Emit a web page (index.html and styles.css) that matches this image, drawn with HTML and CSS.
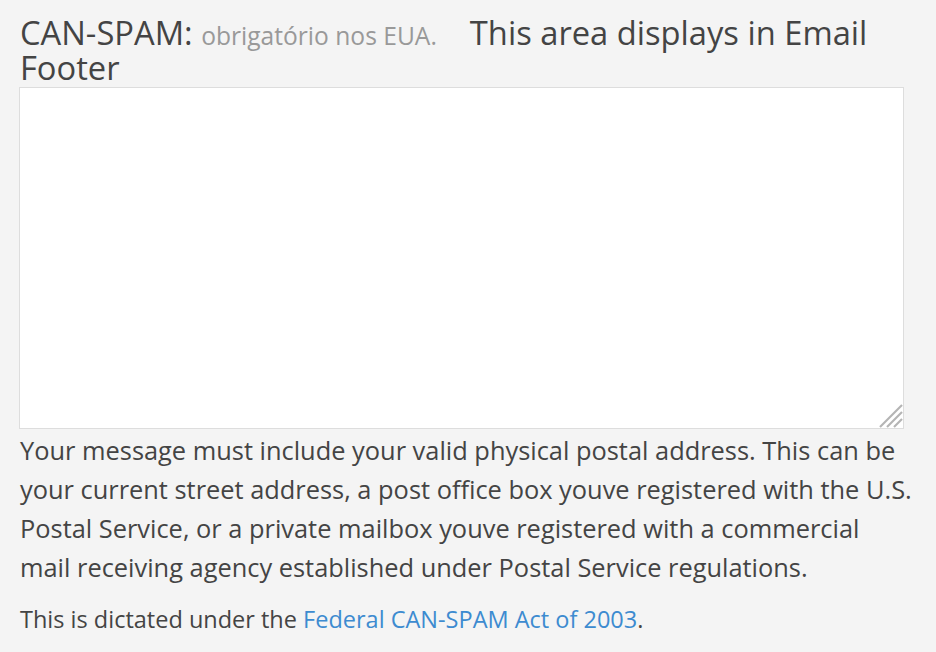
FILE: index.html
```html
<!DOCTYPE html>
<html>
<head>
<meta charset="utf-8">
<link rel="stylesheet" href="styles.css">
</head>
<body>
<div class="wrap">
  <h2 class="title">CAN-SPAM: <span class="sub">obrigatório nos EUA.</span><span class="tag">This area displays in Email Footer</span></h2>
  <div class="field">
    <textarea class="footer-box"></textarea>
    <svg class="grip" width="24" height="24" viewBox="0 0 24 24" aria-hidden="true">
      <line x1="23" y1="1" x2="1" y2="23" />
      <line x1="23" y1="8" x2="8" y2="23" />
      <line x1="23" y1="15" x2="15" y2="23" />
    </svg>
  </div>
  <p class="desc">Your message must include your valid physical postal address. This can be<br>your current street address, a post office box youve registered with the U.S.<br>Postal Service, or a private mailbox youve registered with a commercial<br>mail receiving agency established under Postal Service regulations.</p>
  <p class="note">This is dictated under the <a href="#" class="link">Federal CAN-SPAM Act of 2003</a>.</p>
</div>
</body>
</html>
```

FILE: styles.css
```css
html, body {
  margin: 0;
  padding: 0;
  background: #f4f4f4;
}
.wrap {
  padding: 16px 0 0 19px;
  font-family: "Open Sans", "Liberation Sans", sans-serif;
  color: #444;
}
.title {
  margin: 0;
  width: 885px;
  padding-left: 1px;
  font-size: 32.7px;
  line-height: 34.7px;
  font-weight: 400;
  color: #444;
}
.sub {
  font-size: 24.6px;
  line-height: 1;
  color: #999;
}
.tag {
  margin-left: 33px;
}
.field {
  position: relative;
  width: 885px;
  height: 342px;
  margin-top: 2px;
}
.footer-box {
  display: block;
  box-sizing: border-box;
  width: 100%;
  height: 100%;
  margin: 0;
  border: 1px solid #ddd;
  background: #fff;
  resize: none;
}
.grip {
  position: absolute;
  right: 1px;
  bottom: 1px;
  stroke: #b4b4b4;
  stroke-width: 2.2;
}
.desc {
  width: 912px;
  margin: 2px 0 0 1px;
  font-size: 25.4px;
  line-height: 38.7px;
}
.note {
  margin: 14px 0 0 1px;
  font-size: 23.5px;
  line-height: 38.7px;
}
.link {
  color: #3d8bd0;
  text-decoration: none;
}
```
